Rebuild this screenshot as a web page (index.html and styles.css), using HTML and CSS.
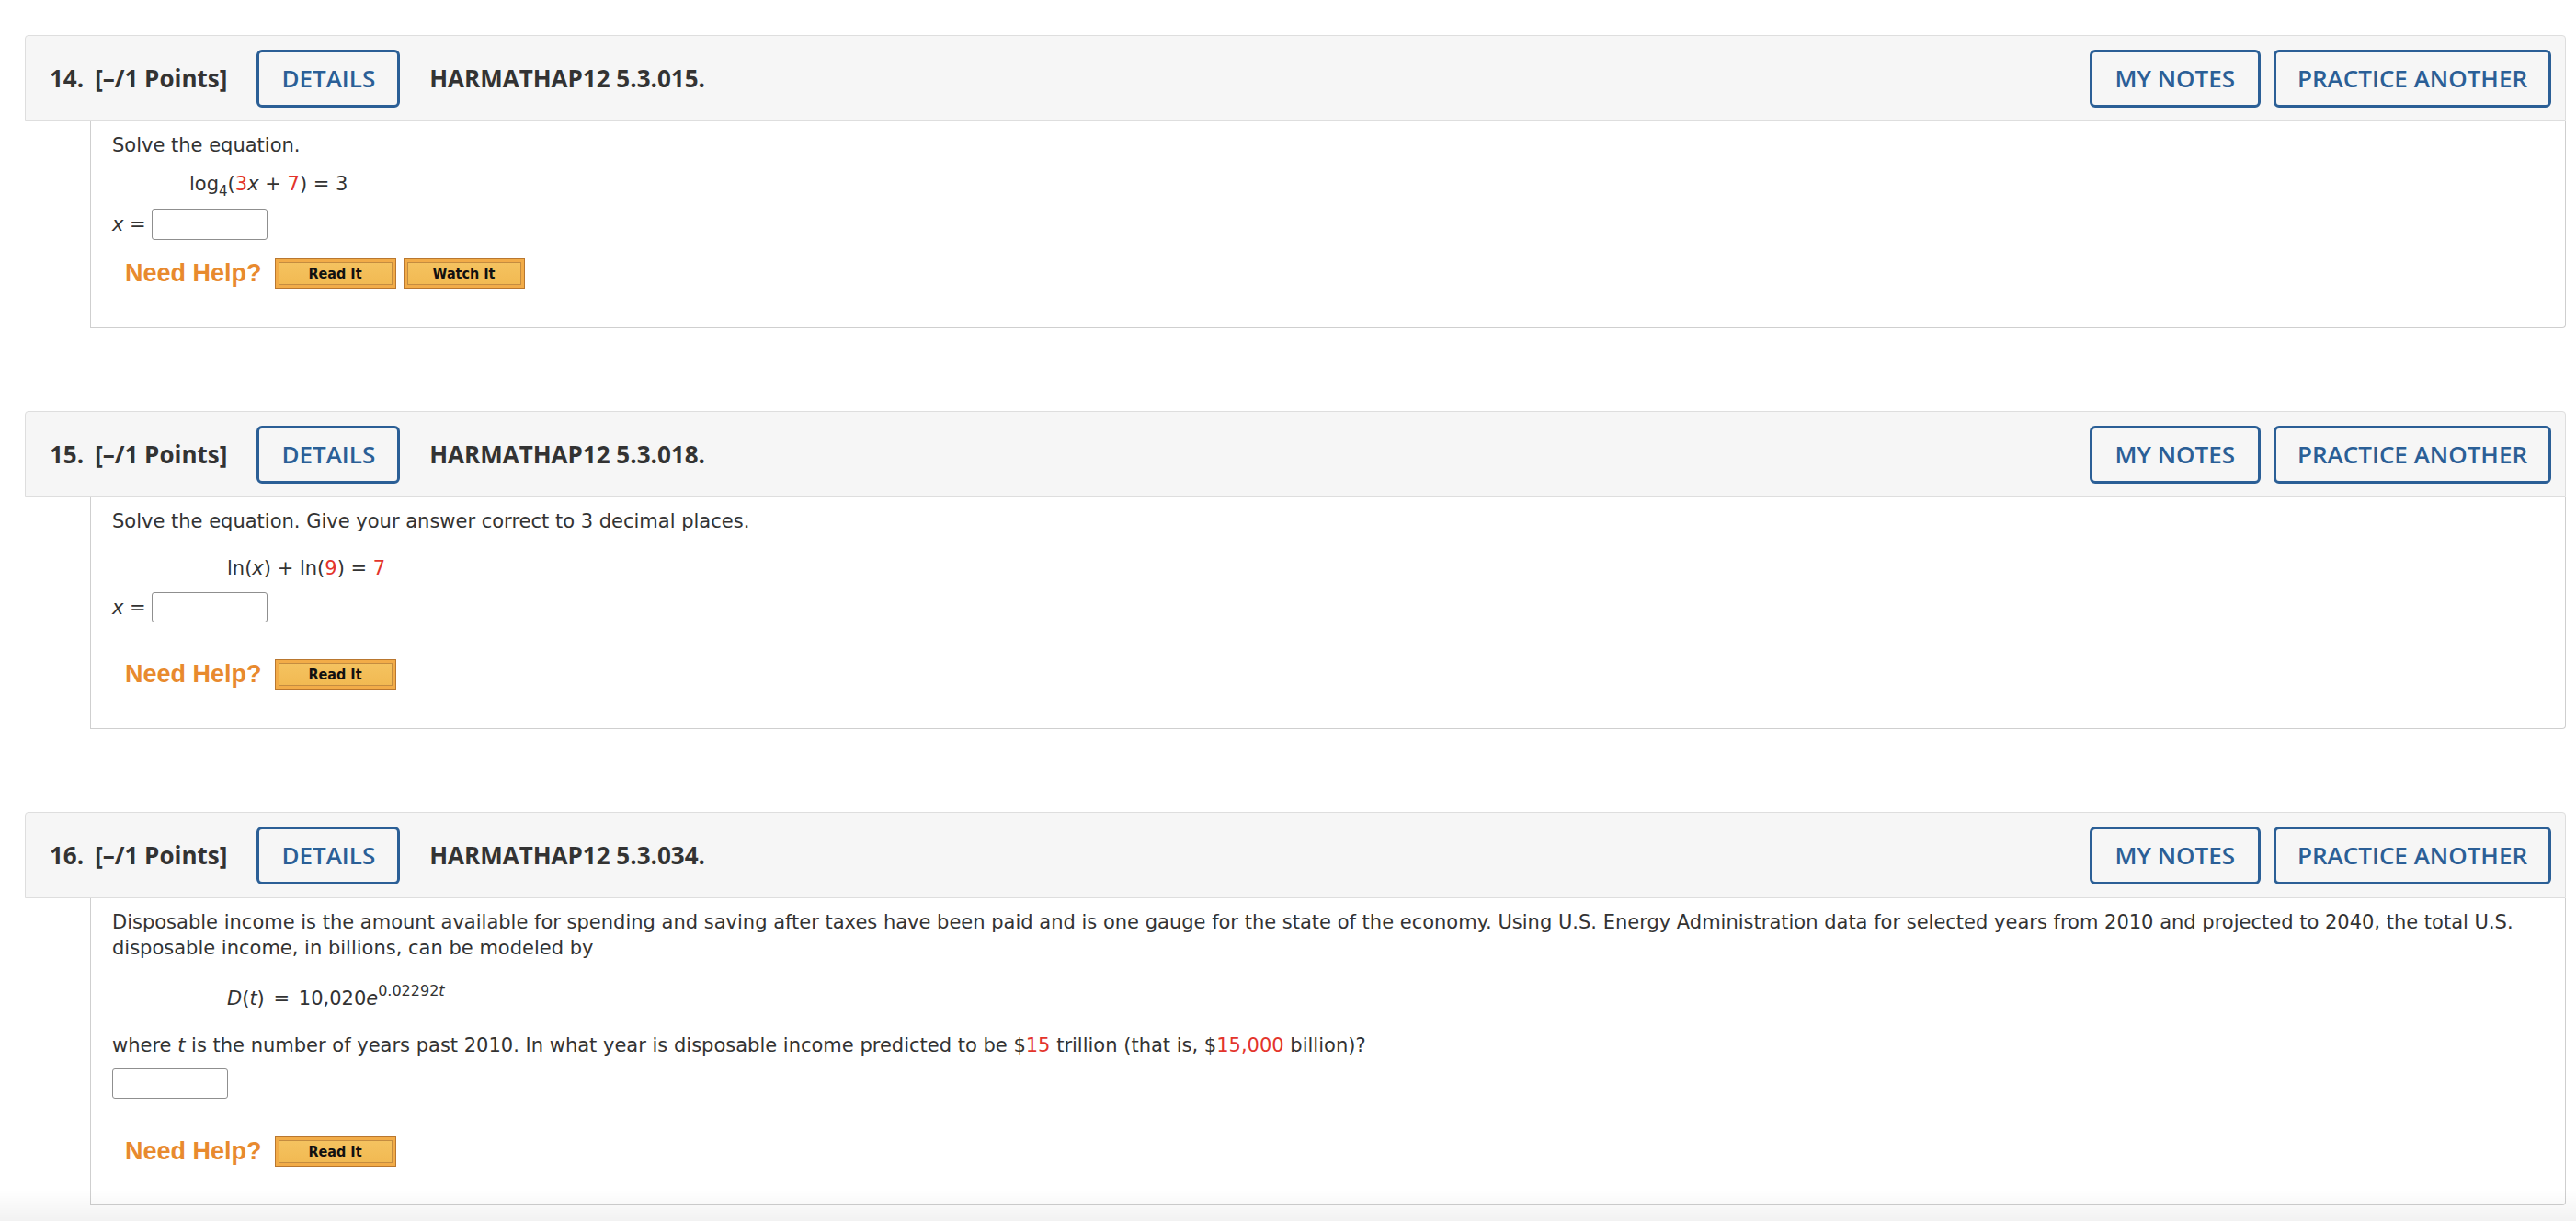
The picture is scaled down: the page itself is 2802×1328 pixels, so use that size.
FILE: index.html
```html
<!DOCTYPE html>
<html lang="en">
<head>
<meta charset="utf-8">
<title>Questions</title>
<link rel="stylesheet" href="styles.css">
</head>
<body>
<div class="page">

  <section class="question">
    <div class="q-head">
      <div class="q-num"><span>14.</span><span>[–/1 Points]</span></div>
      <button class="btn btn-details">DETAILS</button>
      <div class="q-code">HARMATHAP12 5.3.015.</div>
      <div class="head-actions">
        <button class="btn">MY NOTES</button>
        <button class="btn">PRACTICE ANOTHER</button>
      </div>
    </div>
    <div class="q-body q14">
      <p class="line">Solve the equation.</p>
      <div class="line eq eq-a">log<sub class="sub">4</sub>(<span class="red">3</span><i>x</i> + <span class="red">7</span>) = 3</div>
      <div class="answer"><i>x</i>&nbsp;=&nbsp;<span class="input"></span></div>
      <div class="help">
        <span class="need">Need Help?</span>
        <button class="help-btn">Read It</button>
        <button class="help-btn">Watch It</button>
      </div>
    </div>
  </section>

  <section class="question">
    <div class="q-head">
      <div class="q-num"><span>15.</span><span>[–/1 Points]</span></div>
      <button class="btn btn-details">DETAILS</button>
      <div class="q-code">HARMATHAP12 5.3.018.</div>
      <div class="head-actions">
        <button class="btn">MY NOTES</button>
        <button class="btn">PRACTICE ANOTHER</button>
      </div>
    </div>
    <div class="q-body q15">
      <p class="line">Solve the equation. Give your answer correct to 3 decimal places.</p>
      <div class="line eq eq-b">ln(<i>x</i>) + ln(<span class="red">9</span>) = <span class="red">7</span></div>
      <div class="answer"><i>x</i>&nbsp;=&nbsp;<span class="input"></span></div>
      <div class="help">
        <span class="need">Need Help?</span>
        <button class="help-btn">Read It</button>
      </div>
    </div>
  </section>

  <section class="question">
    <div class="q-head">
      <div class="q-num"><span>16.</span><span>[–/1 Points]</span></div>
      <button class="btn btn-details">DETAILS</button>
      <div class="q-code">HARMATHAP12 5.3.034.</div>
      <div class="head-actions">
        <button class="btn">MY NOTES</button>
        <button class="btn">PRACTICE ANOTHER</button>
      </div>
    </div>
    <div class="q-body q16">
      <p class="line">Disposable income is the amount available for spending and saving after taxes have been paid and is one gauge for the state of the economy. Using U.S. Energy Administration data for selected years from 2010 and projected to 2040, the total U.S. disposable income, in billions, can be modeled by</p>
      <div class="line eq eq-b eq-d"><i>D</i>(<i>t</i>) <span class="op">=</span> 10,020<i>e</i><sup class="sup">0.02292<i>t</i></sup></div>
      <p class="line where">where <i>t</i> is the number of years past 2010. In what year is disposable income predicted to be $<span class="red">15</span> trillion (that is, $<span class="red">15,000</span> billion)?</p>
      <div class="answer"><span class="input"></span></div>
      <div class="help">
        <span class="need">Need Help?</span>
        <button class="help-btn">Read It</button>
      </div>
    </div>
  </section>

</div>
<div class="bottom-fade"></div>
</body>
</html>
```

FILE: styles.css
```css
* { box-sizing: border-box; }

html, body {
  margin: 0;
  padding: 0;
  background: #ffffff;
}

body {
  font-family: "DejaVu Sans", Verdana, sans-serif;
  color: #333333;
  font-size: 21px;
}

.page {
  padding: 38px 11px 0 27px;
}

.question {
  margin-bottom: 90px;
}

.question:last-child {
  margin-bottom: 0;
}

/* ---------- header ---------- */
.q-head {
  display: flex;
  align-items: center;
  gap: 32px;
  height: 94px;
  padding: 0 15px 0 26px;
  background: #f6f6f6;
  border: 1px solid #dedede;
  border-radius: 4px 4px 0 0;
  font-family: "Open Sans", sans-serif;
  color: #333333;
}

.q-num {
  display: flex;
  gap: 12px;
  font-size: 26px;
  font-weight: 700;
}

.q-code {
  font-size: 26px;
  font-weight: 700;
}

.head-actions {
  margin-left: auto;
  display: flex;
  gap: 14px;
}

.btn {
  height: 63px;
  padding: 0 25px;
  background: transparent;
  border: 3px solid #2b5f96;
  border-radius: 6px;
  font-family: "Open Sans", sans-serif;
  font-size: 26px;
  font-weight: 600;
  color: #2b5f96;
  cursor: pointer;
}

.btn-details {
  padding: 0 24px;
}

.head-actions .btn:last-child {
  padding: 0 23px;
}

/* ---------- body ---------- */
.q-body {
  margin-left: 71px;
  border: 1px solid #cfcfcf;
  border-top: none;
  border-radius: 0 0 4px 0;
  padding: 12px 24px 42px 23px;
}

.q16 { padding-bottom: 41px; }

.line {
  margin: 0;
  line-height: 28px;
}

.red { color: #e3342b; }

i { font-style: italic; }

.eq { white-space: nowrap; }

.q14 .eq-a { margin-top: 14px; padding-left: 84px; }
.q15 .eq-b { margin-top: 23px; padding-left: 125px; }
.q16 .eq-b { margin-top: 27px; padding-left: 125px; }

.eq-d .op {
  margin: 0 3px;
}

.sub {
  font-size: 15px;
  line-height: 0;
  vertical-align: -6px;
}

.sup {
  font-size: 16px;
  line-height: 0;
  vertical-align: 10px;
}

.where { margin-top: 23px; }

.answer {
  display: flex;
  align-items: center;
  height: 33px;
  white-space: nowrap;
}

.q14 .answer { margin-top: 13px; height: 34px; }
.q15 .answer { margin-top: 12px; }
.q16 .answer { margin-top: 11px; }

.input {
  display: inline-block;
  width: 126px;
  height: 100%;
  border: 1px solid #8f8f8f;
  border-radius: 3px;
  background: #fff;
}

/* ---------- help ---------- */
.help {
  display: flex;
  align-items: center;
  gap: 8px;
  height: 33px;
}

.q14 .help { margin-top: 20px; }
.q15 .help { margin-top: 40px; }
.q16 .help { margin-top: 41px; }

.need {
  margin-left: 14px;
  margin-right: 6px;
  font-family: "Liberation Sans", Arial, sans-serif;
  font-weight: 700;
  font-size: 27px;
  color: #e88a2e;
}

.help-btn {
  width: 132px;
  height: 33px;
  padding: 0;
  border: 1px solid #b9772f;
  background: linear-gradient(to bottom, #f5c462, #f1b850);
  box-shadow: inset 0 0 0 3px #f2ac48, inset 0 0 0 4px #c48c40;
  font-family: "DejaVu Sans Condensed", "DejaVu Sans", Verdana, sans-serif;
  font-stretch: condensed;
  font-weight: 700;
  font-size: 16px;
  color: #111111;
  cursor: pointer;
}

.bottom-fade {
  position: fixed;
  left: 0;
  right: 0;
  bottom: 0;
  height: 34px;
  pointer-events: none;
  background: linear-gradient(to bottom, rgba(0, 0, 0, 0), rgba(0, 0, 0, 0.05));
}
```
